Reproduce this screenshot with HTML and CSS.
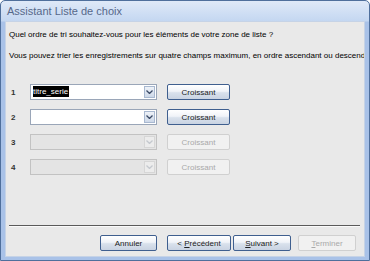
FILE: index.html
```html
<!DOCTYPE html>
<html lang="fr">
<head>
    <meta charset="UTF-8">
    <title>Assistant Liste de choix</title>
    <link rel="stylesheet" href="styles.css">
</head>
<body>
    <div class="window">
        <div class="titlebar">Assistant Liste de choix</div>
        <div class="client">
            <p class="question">Quel ordre de tri souhaitez-vous pour les éléments de votre zone de liste ?</p>
            <p class="hint">Vous pouvez trier les enregistrements sur quatre champs maximum, en ordre ascendant ou descenda</p>

            <div class="rows">
                <div class="row">
                    <span class="num">1</span>
                    <div class="combo">
                        <span class="value"><span class="sel">titre_serie</span></span>
                        <span class="arrow"><svg width="7" height="4" viewBox="0 0 7 4"><path d="M0.5 0.5 L3.5 3.5 L6.5 0.5" fill="none" stroke="#3a4a66" stroke-width="1.3"/></svg></span>
                    </div>
                    <button class="btn">Croissant</button>
                </div>
                <div class="row">
                    <span class="num">2</span>
                    <div class="combo">
                        <span class="value"></span>
                        <span class="arrow"><svg width="7" height="4" viewBox="0 0 7 4"><path d="M0.5 0.5 L3.5 3.5 L6.5 0.5" fill="none" stroke="#3a4a66" stroke-width="1.3"/></svg></span>
                    </div>
                    <button class="btn">Croissant</button>
                </div>
                <div class="row">
                    <span class="num">3</span>
                    <div class="combo off">
                        <span class="value"></span>
                        <span class="arrow"><svg width="7" height="4" viewBox="0 0 7 4"><path d="M0.5 0.5 L3.5 3.5 L6.5 0.5" fill="none" stroke="#c4c8ce" stroke-width="1.3"/></svg></span>
                    </div>
                    <button class="btn off">Croissant</button>
                </div>
                <div class="row">
                    <span class="num">4</span>
                    <div class="combo off">
                        <span class="value"></span>
                        <span class="arrow"><svg width="7" height="4" viewBox="0 0 7 4"><path d="M0.5 0.5 L3.5 3.5 L6.5 0.5" fill="none" stroke="#c4c8ce" stroke-width="1.3"/></svg></span>
                    </div>
                    <button class="btn off">Croissant</button>
                </div>
            </div>

            <div class="separator"></div>

            <div class="footer">
                <button class="btn wide">Annuler</button>
                <button class="btn prev">&lt; <u>P</u>récédent</button>
                <button class="btn next"><u>S</u>uivant &gt;</button>
                <button class="btn finish off"><u>T</u>erminer</button>
            </div>
        </div>
    </div>
</body>
</html>
```

FILE: styles.css
```css
* {
    margin: 0;
    box-sizing: border-box;
}

body {
    width: 370px;
    height: 261px;
    overflow: hidden;
    font-family: "Liberation Sans", Arial, sans-serif;
    font-size: 8px;
    color: #000;
}

.window {
    width: 370px;
    height: 261px;
    display: flex;
    flex-direction: column;
    border: 1px solid #4f6f9c;
    border-radius: 5px 5px 0 0;
    background: linear-gradient(#dfe9f8, #c4d7f1 20px, #a9c2e8 21px, #a9c2e8);
    padding: 0 4px 3px 4px;
}

.titlebar {
    height: 20px;
    line-height: 20px;
    padding-left: 2px;
    font-size: 11px;
    color: #56688a;
    flex-shrink: 0;
}

.client {
    flex: 1;
    background-color: #e9e9e9;
    border: 1px solid #c6d3e6;
    overflow: hidden;
    display: flex;
    flex-direction: column;
}

.question {
    margin: 8px 0 0 3px;
    white-space: nowrap;
    line-height: 10px;
}

.hint {
    margin: 11px 0 0 3px;
    white-space: nowrap;
    line-height: 10px;
}

.rows {
    margin-top: 23px;
    display: flex;
    flex-direction: column;
    gap: 9px;
}

.row {
    display: flex;
    align-items: center;
    height: 16px;
}

.num {
    width: 24px;
    padding-left: 5px;
    font-weight: bold;
    color: #333;
}

.combo {
    width: 127px;
    height: 16px;
    display: flex;
    background: #fff;
    border: 1px solid #9aa6b8;
    padding: 1px;
}

.combo .value {
    flex: 1;
    padding-left: 1px;
    line-height: 12px;
}

.sel {
    background: #000;
    color: #fff;
    padding: 1px 1px 1px 0;
}

.combo .arrow {
    width: 11px;
    display: flex;
    align-items: center;
    justify-content: center;
    background: linear-gradient(#eef2f8, #cdd8e8);
    border: 1px solid #a8b8d0;
}

.combo.off {
    background: #e4e4e4;
    border-color: #c2c2c2;
}

.combo.off .arrow {
    background: #ececec;
    border-color: #d6d6d6;
}

.btn {
    font-family: inherit;
    font-size: 8px;
    height: 16px;
    padding: 0;
    color: #222;
    background: linear-gradient(#ffffff, #f0f3f8 45%, #d9e1ec 55%, #c9d3e2);
    border: 1px solid #3f5f8f;
    border-radius: 2px;
}

.row .btn {
    width: 63px;
    margin-left: 10px;
}

.btn.off {
    background: #f1f1f1;
    border-color: #d0d0d0;
    color: #a9a9a9;
}

.separator {
    margin: 50px 4px 0 3px;
    height: 2px;
    background: #5a5a5a;
    border-bottom: 1px solid #fafafa;
}

.footer {
    display: flex;
    margin-top: 8px;
    padding-left: 94px;
}

.footer .wide {
    width: 57px;
}

.footer .prev {
    width: 64px;
    margin-left: 10px;
}

.footer .next {
    width: 58px;
    margin-left: 2px;
}

.footer .finish {
    width: 58px;
    margin-left: 7px;
}
```
